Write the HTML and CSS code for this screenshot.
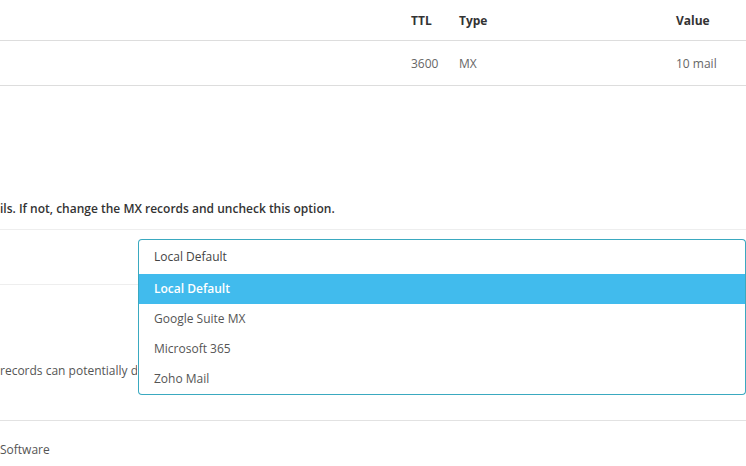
FILE: index.html
```html
<!DOCTYPE html>
<html lang="en">
<head>
<meta charset="utf-8">
<title>Email Routing</title>
<link rel="stylesheet" href="styles.css">
</head>
<body>
<div class="page">
  <div class="records">
    <div class="rec-row rec-head">
      <div class="c-name"></div>
      <div class="c-ttl">TTL</div>
      <div class="c-type">Type</div>
      <div class="c-val">Value</div>
    </div>
    <div class="rec-row rec-body">
      <div class="c-name"></div>
      <div class="c-ttl">3600</div>
      <div class="c-type">MX</div>
      <div class="c-val">10 mail</div>
    </div>
  </div>

  <p class="notice">ils. If not, change the MX records and uncheck this option.</p>

  <div class="form-row row-select">
    <div class="select-wrap">
      <div class="select-box">Local Default</div>
      <ul class="select-list">
        <li class="opt active">Local Default</li>
        <li class="opt">Google Suite MX</li>
        <li class="opt">Microsoft 365</li>
        <li class="opt">Zoho Mail</li>
      </ul>
    </div>
  </div>

  <div class="form-row row-help">
    <p class="help">records can potentially d</p>
  </div>

  <div class="form-row row-software">
    <p class="software">Software</p>
  </div>
</div>
</body>
</html>
```

FILE: styles.css
```css
html, body {
  margin: 0;
  padding: 0;
  background: #ffffff;
  overflow: hidden;
}

body {
  width: 746px;
  height: 466px;
  font-family: "Open Sans", "Liberation Sans", sans-serif;
  font-size: 12px;
  color: #333333;
}

.page {
  display: flex;
  flex-direction: column;
}

.records {
  display: flex;
  flex-direction: column;
}

.rec-row {
  display: grid;
  grid-template-columns: 411px 48px 217px 1fr;
  align-items: center;
  border-bottom: 1px solid #dddddd;
}

.rec-head {
  height: 40px;
  font-weight: 700;
  color: #333333;
}

.rec-body {
  height: 44px;
  color: #666666;
}

.notice {
  margin: 114px 0 0 0;
  line-height: 18px;
  font-weight: 600;
  color: #333333;
  height: 24px;
  padding-bottom: 5px;
  white-space: nowrap;
}

.form-row {
  border-top: 1px solid #eeeeee;
}

.row-select {
  height: 54px;
  display: flex;
  align-items: flex-start;
}

.select-wrap {
  position: relative;
  margin: 9px 0 0 138px;
  width: 700px;
}

.select-box {
  height: 34px;
  line-height: 34px;
  padding-left: 15px;
  border: 1px solid #3aa9c0;
  border-bottom: none;
  border-radius: 4px 4px 0 0;
  color: #444444;
  background: #ffffff;
}

.select-list {
  position: absolute;
  left: 0;
  right: 0;
  top: 35px;
  margin: 0;
  padding: 0;
  list-style: none;
  background: #ffffff;
  border: 1px solid #3aa9c0;
  border-top: none;
  border-radius: 0 0 4px 4px;
  z-index: 2;
}

.opt {
  height: 30px;
  line-height: 30px;
  padding-left: 15px;
  color: #555555;
}

.opt.active {
  background: #41bbed;
  color: #ffffff;
  font-weight: 600;
}

.row-help {
  height: 135px;
  display: flex;
  align-items: flex-end;
}

.help {
  margin: 0 0 40px 0;
  line-height: 18px;
  color: #555555;
  white-space: nowrap;
  overflow: hidden;
  width: 137px;
}

.row-software {
  border-top-color: #e2e2e2;
}

.software {
  margin: 20px 0 0 0;
  line-height: 18px;
  color: #555555;
}
```
